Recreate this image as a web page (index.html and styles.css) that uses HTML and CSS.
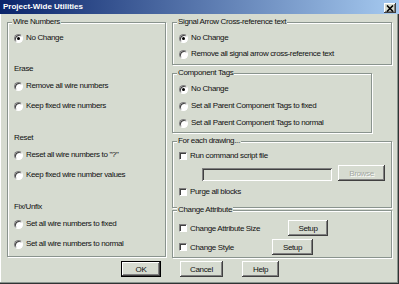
FILE: index.html
```html
<!DOCTYPE html>
<html>
<head>
<meta charset="utf-8">
<link rel="stylesheet" href="styles.css">
</head>
<body>
<div class="window">
  <div class="titlebar">
    <span class="title">Project-Wide Utilities</span>
    <span class="close"><svg width="8" height="7" viewBox="0 0 8 7"><path d="M1 0.5 L7 6.5 M7 0.5 L1 6.5" stroke="#000" stroke-width="1.6" fill="none"/></svg></span>
  </div>
  <div class="main">
    <div class="group left">
      <div class="legend">Wire Numbers</div>
      <div class="opt top"><span class="radio on"></span>No Change</div>
      <div class="sect first">Erase</div>
      <div class="opt tight"><span class="radio"></span>Remove all wire numbers</div>
      <div class="opt"><span class="radio"></span>Keep fixed wire numbers</div>
      <div class="sect">Reset</div>
      <div class="opt tight"><span class="radio"></span>Reset all wire numbers to "?"</div>
      <div class="opt"><span class="radio"></span>Keep fixed wire number values</div>
      <div class="sect">Fix/Unfix</div>
      <div class="opt tight"><span class="radio"></span>Set all wire numbers to fixed</div>
      <div class="opt"><span class="radio"></span>Set all wire numbers to normal</div>
    </div>
    <div class="rightcol">
      <div class="group signal">
        <div class="legend">Signal Arrow Cross-reference text</div>
        <div class="opt top"><span class="radio on"></span>No Change</div>
        <div class="opt top"><span class="radio"></span>Remove all signal arrow cross-reference text</div>
      </div>
      <div class="group comp">
        <div class="legend">Component Tags</div>
        <div class="opt top"><span class="radio on"></span>No Change</div>
        <div class="opt tight"><span class="radio"></span>Set all Parent Component Tags to fixed</div>
        <div class="opt tight"><span class="radio"></span>Set all Parent Component Tags to normal</div>
      </div>
      <div class="group drawing">
        <div class="legend">For each drawing...</div>
        <div class="opt run"><span class="check"></span>Run command script file</div>
        <div class="fieldrow">
          <span class="field"></span>
          <button class="btn browse disabled">Browse</button>
        </div>
        <div class="opt purge"><span class="check"></span>Purge all blocks</div>
      </div>
      <div class="group attr">
        <div class="legend">Change Attribute</div>
        <div class="arow first"><span class="check"></span><span class="lbl w-size">Change Attribute Size</span><button class="btn setup1">Setup</button></div>
        <div class="arow second"><span class="check"></span><span class="lbl w-style">Change Style</span><button class="btn setup2">Setup</button></div>
      </div>
    </div>
  </div>
  <div class="buttons">
    <button class="btn default ok">OK</button>
    <button class="btn cancel">Cancel</button>
    <button class="btn help">Help</button>
  </div>
</div>
</body>
</html>
```

FILE: styles.css
```css
* { box-sizing: border-box; }
html, body { margin: 0; padding: 0; }
body {
  width: 399px;
  height: 284px;
  overflow: hidden;
  background: #d6dbd0;
  font-family: "Liberation Sans", Arial, sans-serif;
  font-size: 8px;
  letter-spacing: -0.35px;
  color: #111;
}
.window {
  width: 399px;
  height: 284px;
  display: flex;
  flex-direction: column;
  box-shadow: inset -1px -1px 0 #303434, inset -2px -2px 0 #8a948e, inset 1px 0 0 #fff;
}
.titlebar {
  height: 14px;
  flex: none;
  display: flex;
  align-items: center;
  justify-content: space-between;
  padding: 0 3px;
  background: linear-gradient(90deg, #0a246a 0%, #a6caf0 100%);
}
.title {
  color: #fff;
  font-weight: bold;
  letter-spacing: 0;
  line-height: 10px;
}
.close {
  width: 12px;
  height: 10px;
  align-self: flex-start;
  margin-top: 3px;
  background: #d6dbd0;
  box-shadow: inset -1px -1px 0 #404040, inset 1px 1px 0 #fff, inset -2px -2px 0 #808080;
  display: flex;
  align-items: center;
  justify-content: center;
}
.close svg { display: block; }
.main {
  display: flex;
  gap: 6px;
  padding: 8px 0 0 7px;
}
.group {
  border: 1px solid #8a948e;
  box-shadow: inset 1px 1px 0 #fff, 1px 1px 0 #fff;
}
.legend {
  width: max-content;
  height: 10px;
  line-height: 10px;
  margin: -6px 0 0 4px;
  padding: 0 1px;
  background: #d6dbd0;
}
.left { width: 159px; height: 235px; }
.opt {
  display: flex;
  align-items: center;
  height: 10px;
  line-height: 10px;
  margin: 10px 0 0 6px;
  white-space: nowrap;
}
.opt.top { margin-top: 6px; }
.opt.tight { margin-top: 7px; }
.sect {
  height: 10px;
  line-height: 10px;
  margin: 22px 0 0 6px;
}
.sect.first { margin-top: 21px; }
.radio {
  flex: none;
  width: 9px;
  height: 9px;
  margin-right: 3px;
  border-radius: 50%;
  background: #fff;
  border: 1px solid;
  border-color: #808080 #fff #fff #808080;
  box-shadow: inset 1px 1px 0 #404040;
  display: flex;
  align-items: center;
  justify-content: center;
}
.radio.on::after {
  content: "";
  width: 3px;
  height: 3px;
  border-radius: 50%;
  background: #000;
}
.check {
  flex: none;
  width: 8px;
  height: 8px;
  margin-right: 3px;
  background: #fff;
  border: 1px solid;
  border-color: #808080 #fff #fff #808080;
  box-shadow: inset 1px 1px 0 #404040;
}
.rightcol {
  width: 220px;
  display: flex;
  flex-direction: column;
}
.signal { height: 43px; }
.comp { width: 200px; height: 60px; margin-top: 8px; }
.drawing { height: 67px; margin-top: 8px; }
.attr { height: 48px; margin-top: 2px; }
.opt.run { margin-top: 5px; }
.opt.purge { margin-top: 6px; }
.fieldrow {
  display: flex;
  align-items: flex-end;
  height: 16px;
  margin: 4px 0 0 29px;
}
.field {
  width: 130px;
  height: 13px;
  box-shadow: inset 1px 1px 0 #808080, inset -1px -1px 0 #fff, inset 2px 2px 0 #404040;
}
.btn {
  height: 16px;
  padding: 0;
  border: none;
  background: #d6dbd0;
  font: inherit;
  letter-spacing: inherit;
  color: #111;
  display: flex;
  align-items: center;
  justify-content: center;
  box-shadow: inset -1px -1px 0 #404040, inset 1px 1px 0 #fff, inset -2px -2px 0 #808080;
}
.btn.default {
  box-shadow: inset 0 0 0 1px #000, inset -2px -2px 0 #404040, inset 2px 2px 0 #fff, inset -3px -3px 0 #808080;
}
.btn.disabled {
  color: #a3a8a2;
  text-shadow: 1px 1px 0 #fff;
}
.browse { width: 47px; margin-left: 6px; }
.arow {
  display: flex;
  align-items: center;
  height: 16px;
  margin-left: 6px;
  white-space: nowrap;
}
.arow.first { margin-top: 5px; }
.arow.second { margin-top: 3px; }
.lbl { display: block; }
.w-size { width: 98px; }
.w-style { width: 82px; }
.setup1 { width: 40px; }
.setup2 { width: 41px; }
.buttons {
  display: flex;
  margin-top: 3px;
  padding-left: 121px;
}
.ok { width: 40px; }
.cancel { width: 43px; margin-left: 19px; }
.help { width: 37px; margin-left: 19px; }
```
